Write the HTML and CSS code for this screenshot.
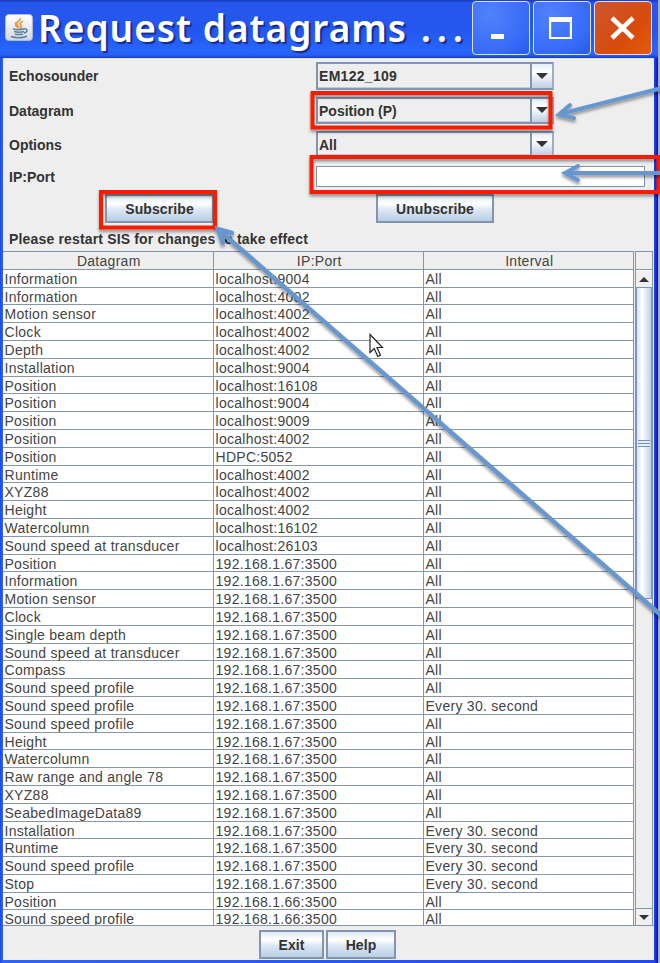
FILE: index.html
```html
<!DOCTYPE html>
<html lang="en">
<head>
<meta charset="utf-8">
<title>Request datagrams</title>
<link rel="stylesheet" href="styles.css">
</head>
<body>
<div class="window">
  <header class="titlebar">
    <svg class="java" width="28" height="27" viewBox="0 0 28 27">
      <defs><linearGradient id="tile" x2="0" y2="1"><stop stop-color="#fff"/><stop offset="1" stop-color="#d4d9df"/></linearGradient></defs>
      <rect x=".6" y=".6" width="26.8" height="25.8" rx="3" fill="url(#tile)" stroke="#b3bdd0"/>
      <path d="M15 4c1 3-5 4-3 7l2 3M18 7c-4 2-3 3-2 5 1 1 0 2-1 3M11 8c-1 3 0 4 2 6" fill="none" stroke="#ee963d" stroke-width="1.7"/>
      <path d="M8 15q6 1.5 11-.3M9 17.5q5 1.5 10 0M10 20q4 1.2 8 0M6 22.5q8 2.5 16-.3M19 15c4-1 4 3 0 4" fill="none" stroke="#58829f" stroke-width="1.5"/>
    </svg>
    <h1>Request datagrams <span class="dots">...</span></h1>
    <div class="controls">
      <span class="ctl"><svg width="57" height="54"><rect x="19" y="33" width="13" height="5" fill="#fff"/></svg></span>
      <span class="ctl"><svg width="57" height="54"><path d="M16 16h23v22H16zM18.200 21h18.600v15H18.200z" fill="#fff" fill-rule="evenodd"/></svg></span>
      <span class="ctl close"><svg width="57" height="54"><path d="M18 17l21 20M39 17L18 37" stroke="#fff" stroke-width="4.500"/></svg></span>
    </div>
  </header>
  <main>
    <div class="form">
      <label>Echosounder</label><div class="combo"><span class="model">EM122_109</span><i class="drop"></i></div>
      <label>Datagram</label><div class="combo"><span>Position (P)</span><i class="drop"></i></div>
      <label>Options</label><div class="combo clipped"><span>All</span><i class="drop"></i></div>
      <label>IP:Port</label><input class="port" type="text" aria-label="IP:Port">
    </div>
    <div class="actions"><button class="btn subscribe">Subscribe</button><button class="btn unsubscribe">Unubscribe</button></div>
    <p class="note">Please restart SIS for changes to take effect</p>
    <section class="grid">
      <div class="data">
        <div class="row head"><span>Datagram</span><span>IP:Port</span><span>Interval</span></div>
        <div class="rows" id="rows"></div>
      </div>
      <div class="scroll">
        <div class="corner"></div>
        <div class="arrow up"></div>
        <div class="thumb"><i></i></div>
        <div class="track"></div>
        <div class="arrow"></div>
      </div>
    </section>
    <footer><button class="btn exit">Exit</button><button class="btn help">Help</button></footer>
  </main>
</div>
<svg class="notes" width="660" height="963" viewBox="0 0 660 963">
  <defs><filter id="shade" x="-10%" y="-20%" width="120%" height="150%"><feDropShadow dx="0" dy="2.500" stdDeviation="1.800" flood-opacity=".4"/></filter></defs>
  <g fill="none" stroke="#f71e06" stroke-width="4" filter="url(#shade)">
    <rect x="312.500" y="93" width="238" height="34.500"/>
    <rect x="311.500" y="157" width="347" height="35"/>
    <rect x="101" y="192" width="114" height="35.500"/>
  </g>
  <g fill="none" stroke="#6796ce" stroke-width="4" filter="url(#shade)">
    <path d="M662 88L560 114"/><path d="M570 105L559 114.500L574 118" stroke-linecap="round"/>
    <path d="M662 173H565"/><path d="M578 166L565 173L578 180" stroke-linecap="round"/>
    <path d="M662 616L219 230" stroke-width="4.500"/><path d="M232 233L218 229L223 243" stroke-width="4.500" stroke-linecap="round"/>
  </g>
  <path d="M370 334.500V352.500L374.200 348.500L377.800 356.500L380.500 355.300L377 347.500H382.500Z" fill="#fff" stroke="#222" stroke-width="1.200"/>
</svg>
<script src="script.js"></script>
</body>
</html>
```
FILE: styles.css
```css
* { box-sizing: border-box; }
body { margin: 0; width: 660px; height: 963px; overflow: hidden; position: relative; background: #a9abc4; font-family: "Liberation Sans", Arial, sans-serif; color: #333; }
.window { width: 658px; height: 963px; display: flex; flex-direction: column; background: linear-gradient(90deg, #1c49e2, #3164f5 3px, #2348f0 654px, #0713b8 658px); }
.titlebar { height: 58px; display: flex; align-items: flex-start; background: linear-gradient(#1839bd 0, #2857ec 3px, #2356ee 30px, #2865fb 50px, #2860f5 55px, #183bbd 58px); }
.java { margin: 14px 0 0 5px; flex: none; }
h1 { margin: 1px 0 0 5px; width: 434px; white-space: nowrap; color: #fff; font: 600 37px/54px "Noto Sans", sans-serif; letter-spacing: 1px; text-shadow: 2px 2px 1px #172b91; }
.dots { letter-spacing: 5.8px; margin-left: 3px; }
.controls { display: flex; gap: 3px; padding-top: 1px; }
.ctl { width: 58px; height: 54px; border: 1.500px solid #d9e3ff; border-radius: 4px; background: radial-gradient(circle at 30% 25%, #5182fa, #386cf8 65%, #2859ec); }
.ctl svg { display: block; margin: -1px; }
.close { background: linear-gradient(135deg, #cc5632, #d84b0c 60%, #e35b0e); }
main { width: 651px; height: 902px; margin-left: 3px; background: #eee; border-top: 1px solid #dbe3ef; display: flex; flex-direction: column; }
.form { height: 131px; padding: 3px 0 0 6px; display: grid; grid-template-columns: 307px 329px; grid-template-rows: 34.500px 34.500px 33px 26px; align-items: start; font-weight: 700; font-size: 14px; }
.form label { line-height: 28px; }
.form label:nth-of-type(4) { line-height: 26px; }
.combo { width: 238px; height: 27.500px; border: 2px solid #8295ae; border-right-color: #a0afc0; display: flex; justify-content: space-between; line-height: 25px; box-shadow: inset 0 -1px #bdcddd; }
.combo span { padding-left: 1px; }
.combo .model { letter-spacing: .3px; }
.clipped { height: 26px; }
.drop { width: 22px; border-left: 2px solid #8295ae; background: linear-gradient(#e3edf8, #fff 35%, #bed0e5); display: grid; place-items: center; }
.drop::after { content: ""; border: 6px solid transparent; border-top-color: #333; border-bottom: 0; }
.port { margin-top: 2px; width: 329px; height: 21px; border: 1.500px solid #8295ae; background: #fff; padding: 0; }
.actions { height: 39px; display: flex; padding: 4px 0 0 102px; }
.btn { height: 29px; padding: 0; border: 2px solid #8295ae; color: #333; font: 700 14px/22px "Liberation Sans", sans-serif; letter-spacing: .1px; background: linear-gradient(#e0e9f4, #fff 30%, #dce7f4 55%, #b8cde5); }
.subscribe { width: 109px; }
.unsubscribe { width: 118px; margin-left: 162px; }
.note { margin: 0; height: 22px; padding-left: 6px; font-size: 14px; line-height: 21px; font-weight: 700; letter-spacing: .16px; }
.grid { height: 675px; display: flex; border-bottom: 1px solid #8295ae; }
.data { width: 631px; display: flex; flex-direction: column; border-right: 1.500px solid #8295ae; }
.row { display: grid; grid-template-columns: 211px 210px 209px; height: 17.800px; flex: none; font-size: 14px; line-height: 18px; letter-spacing: .28px; color: #444; background: #fff; border-bottom: 1.500px solid #8797aa; white-space: nowrap; }
.row span { border-right: 1.500px solid #8797aa; padding-left: 1.500px; }
.row span:last-child { border-right: 0; }
.head { height: 18.800px; background: #eee; border-top: 1.500px solid #8295ae; text-align: center; }
.rows { flex: 1; overflow: hidden; }
.scroll { width: 18px; margin-left: 1px; display: flex; flex-direction: column; border: 1px solid #8295ae; border-bottom: 0; }
.corner { height: 18px; border-bottom: 1px solid #8295ae; }
.arrow { height: 17px; background: #f0f0f0; display: grid; place-items: center; border-top: 1px solid #8295ae; }
.arrow::after { content: ""; border: 5px solid transparent; border-top-color: #333; border-bottom: 0; }
.up { border-top-color: #fff; }
.up::after { transform: rotate(180deg); }
.thumb { height: 312px; border: 1.500px solid #7795cc; background: linear-gradient(90deg, #d6e4f7, #fff 35%, #bfd2e9); display: grid; place-items: center; }
.thumb i { width: 12px; height: 7px; background: repeating-linear-gradient(#6e8fd0 0 1px, #e5eefa 1px 3px); }
.track { flex: 1; background: #eee; }
footer { padding: 4px 0 0 256px; display: flex; gap: 2px; }
.exit { width: 65px; }
.help { width: 70px; }
.notes { position: absolute; left: 0; top: 0; }
```
FILE: script.js
```js
const local = [
  ['Information', 'localhost:9004'], ['Information', 'localhost:4002'], ['Motion sensor', 'localhost:4002'],
  ['Clock', 'localhost:4002'], ['Depth', 'localhost:4002'], ['Installation', 'localhost:9004'],
  ['Position', 'localhost:16108'], ['Position', 'localhost:9004'], ['Position', 'localhost:9009'],
  ['Position', 'localhost:4002'], ['Position', 'HDPC:5052'], ['Runtime', 'localhost:4002'],
  ['XYZ88', 'localhost:4002'], ['Height', 'localhost:4002'], ['Watercolumn', 'localhost:16102'],
  ['Sound speed at transducer', 'localhost:26103']
];
const E = 'Every 30. second';
const remote = [
  ['Position'], ['Information'], ['Motion sensor'], ['Clock'], ['Single beam depth'], ['Sound speed at transducer'],
  ['Compass'], ['Sound speed profile'], ['Sound speed profile', E], ['Sound speed profile'], ['Height'],
  ['Watercolumn'], ['Raw range and angle 78'], ['XYZ88'], ['SeabedImageData89'], ['Installation', E],
  ['Runtime', E], ['Sound speed profile', E], ['Stop', E]
].map(([name, every]) => [name, '192.168.1.67:3500', every]);
const last = [['Position', '192.168.1.66:3500'], ['Sound speed profile', '192.168.1.66:3500']];
const rows = document.getElementById('rows');
for (const [name, port, every = 'All'] of [...local, ...remote, ...last]) {
  const row = document.createElement('div');
  row.className = 'row';
  for (const text of [name, port, every]) {
    const cell = document.createElement('span');
    cell.textContent = text;
    row.append(cell);
  }
  rows.append(row);
}
```
